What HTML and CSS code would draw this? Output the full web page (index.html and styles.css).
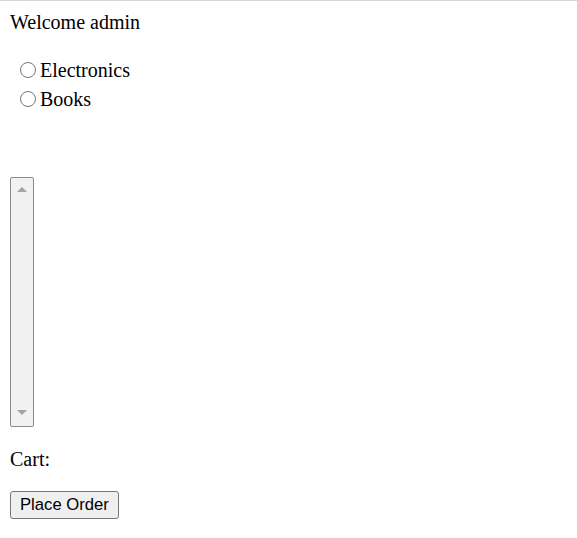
FILE: index.html
```html
<!DOCTYPE html>
<html lang="en">
<head>
<meta charset="utf-8">
<title>Shop</title>
<link rel="stylesheet" href="styles.css">
</head>
<body>
<div class="welcome">Welcome admin</div>
<form class="categories">
  <label class="option"><input type="radio" name="cat" class="radio"><span>Electronics</span></label>
  <label class="option"><input type="radio" name="cat" class="radio"><span>Books</span></label>
</form>
<div class="listbox" role="listbox" aria-label="Products">
  <span class="arrow arrow-up"></span>
  <span class="arrow arrow-down"></span>
</div>
<p class="cart">Cart:</p>
<button class="order" type="button">Place Order</button>
</body>
</html>
```
FILE: styles.css
```css
html, body {
  margin: 0;
  padding: 0;
  background: #ffffff;
}
body {
  border-top: 1px solid #d6d6d6;
  padding: 10px 10px 0;
  font-family: "Liberation Serif", "Times New Roman", serif;
  font-size: 20px;
  line-height: 23px;
  color: #000000;
}
.welcome {
  height: 23px;
}
.categories {
  margin-top: 25px;
  display: flex;
  flex-direction: column;
  gap: 6px;
}
.option {
  display: flex;
  align-items: flex-start;
  height: 23px;
}
.radio {
  appearance: none;
  -webkit-appearance: none;
  box-sizing: border-box;
  width: 16px;
  height: 16px;
  margin: 3px 4px 0 10px;
  border: 1px solid #767676;
  border-radius: 50%;
  background: #ffffff;
}
.listbox {
  margin-top: 66px;
  box-sizing: border-box;
  width: 24px;
  height: 250px;
  border: 1px solid #8a8a8a;
  border-radius: 2px;
  background: #f1f1f1;
  display: flex;
  flex-direction: column;
  justify-content: space-between;
  align-items: center;
  padding: 9px 0 11px;
}
.arrow {
  width: 0;
  height: 0;
  border-left: 5px solid transparent;
  border-right: 5px solid transparent;
}
.arrow-up {
  border-bottom: 5px solid #a3a3a3;
}
.arrow-down {
  border-top: 5px solid #a3a3a3;
}
.cart {
  margin: 21px 0 0;
}
.order {
  margin-top: 20px;
  box-sizing: border-box;
  height: 28px;
  padding: 0 9px;
  border: 1px solid #767676;
  border-radius: 3px;
  background: #efefef;
  font-family: "Liberation Sans", Arial, sans-serif;
  font-size: 16.67px;
  color: #000000;
}
```
